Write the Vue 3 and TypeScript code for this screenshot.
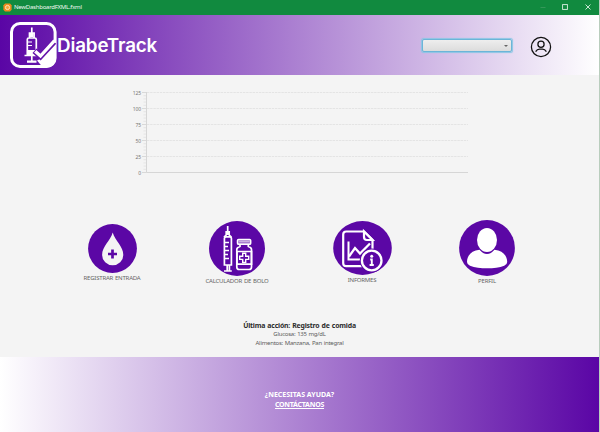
<script setup lang="ts">
interface Tick {
  value: number
  y: number
}

const ticks: Tick[] = [125, 100, 75, 50, 25, 0].map((value, i) => ({ value, y: 4.5 + i * 16 }))
const minorTicks: number[] = Array.from({ length: 25 }, (_, i) => 4.5 + i * 3.2)
</script>

<template>
  <div class="window">
    <div class="titlebar">
      <svg class="app-icon" viewBox="0 0 9 9">
        <path d="M2 .6h5L8.6 2.2v4.6L7 8.4H2L.4 6.8V2.2z" fill="#f08a1c" />
        <circle cx="4.5" cy="4.5" r="2.1" fill="#f9a43c" stroke="#ffe3b5" stroke-width="1" />
      </svg>
      <span class="title">NewDashboardFXML.fxml</span>
      <svg class="controls" viewBox="0 0 60 15">
        <path d="M.5 7.5h5" stroke="#3d9c60" stroke-width=".8" />
        <rect x="22.6" y="4.6" width="4.8" height="4.8" fill="none" stroke="#dcefe2" stroke-width=".9" />
        <path d="M45.5 4.5l5 5m0-5l-5 5" stroke="#dcefe2" stroke-width=".9" />
      </svg>
    </div>

    <header class="header">
      <svg class="logo" viewBox="0 0 48 48">
        <path d="M46.500 21v16.500q0 9-9 9H34L28 39.500 33 37z" fill="#fff" />
        <rect x="2.500" y="2.500" width="43.600" height="43" rx="8.500" fill="none" stroke="#fff" stroke-width="3" />
        <path d="M22.800 6.500V12M20.500 17v-5h4.600v5M18.300 35V18.500q0-1.500 1.500-1.500h6q1.500 0 1.500 1.500V35M15.500 34.500h14.500M22.800 35v5" fill="none" stroke="#fff" stroke-width="1.700" />
        <path d="M21 12h3.600v4H21zM18.500 29h8.500v6h-8.500zM18 39.500h9.500v2.300H18z" fill="#fff" />
        <path d="M19 21h4M19 24.500h4" stroke="#fff" stroke-width="1.200" />
        <path d="M25.500 29.800l6 5.400L45 20.800" fill="none" stroke="#6514aa" stroke-width="6" />
        <path d="M26.200 30.200l5.300 4.800L45.500 19.700" fill="none" stroke="#fff" stroke-width="3.300" />
      </svg>
      <span class="brand">DiabeTrack</span>
      <div class="combo"><i class="arrow"></i></div>
      <svg class="account" viewBox="0 0 22 22" fill="none" stroke="#111" stroke-width="1.250">
        <circle cx="11" cy="11" r="9.600" />
        <circle cx="11" cy="8.200" r="3.100" />
        <path d="M5.600 15.700Q7.200 13.200 9.500 13.200h3q2.300 0 3.900 2.500" />
      </svg>
    </header>

    <main class="content">
      <svg class="chart" viewBox="0 0 350 90">
        <g v-for="t in ticks" :key="t.value">
          <text x="21" :y="t.y + 2" class="tick-label">{{ t.value }}</text>
          <path :d="`M22 ${t.y}h4.500`" stroke="#d0d0d0" stroke-width=".8" />
          <path v-if="t.value" :d="`M27 ${t.y}H348`" stroke="#e2e2e2" stroke-width=".9" stroke-dasharray="2.400 .8" />
        </g>
        <path v-for="y in minorTicks" :key="y" :d="`M23.500 ${y}h2.500`" stroke="#dadada" stroke-width=".6" />
        <path d="M26.500 4V84.500H348" fill="none" stroke="#d6d6d6" stroke-width="1" />
      </svg>

      <nav class="tiles">
        <a class="tile entry">
          <svg viewBox="0 0 49 49">
            <circle cx="24.500" cy="24.500" r="24.400" fill="#5b07a5" />
            <path d="M24.700 8.500C27 17 35.300 22 35.300 31a10.600 10.300 0 0 1-21.200 0C14.100 22 22.500 17 24.700 8.500z" fill="#f4f4f4" />
            <path d="M24.500 25.500v9M20 30h9" stroke="#5b07a5" stroke-width="2.700" />
          </svg>
          <span>REGISTRAR ENTRADA</span>
        </a>
        <a class="tile bolus">
          <svg viewBox="0 0 56 55">
            <ellipse cx="28" cy="27.500" rx="28" ry="27.400" fill="#5b07a5" />
            <g fill="none" stroke="#fff" stroke-width="1.700">
              <path d="M18.700 5v9M17.200 10v4l-2.200 2.200M20.200 10v4l2.200 2.200" />
              <path d="M15.400 44V17.500q0-1.700 1.700-1.700h3.600q1.700 0 1.700 1.700V44zM18.200 44v5.500M20.400 44v5.500M15 50h7.800" />
              <path d="M16 21.500h4M16 25.500h3M16 29.500h4M16 33.500h3M16 37.500h4" stroke-width="1.300" />
              <rect x="28.600" y="18.600" width="13" height="4.600" rx="1" />
              <path d="M31 23.500v2q-3.200 1-3.200 3V46q0 2.500 2.500 2.500h9.700q2.500 0 2.500-2.500V28.500q0-2-3.200-3v-2" />
              <path d="M28 30.500h14.500v12.700H28z" />
              <path d="M33.700 32.200h3v3h3v3.200h-3v3h-3v-3h-3v-3.200h3z" stroke-width="1.400" />
            </g>
            <path d="M29.500 19.500h11.300v2.200H29.500z" fill="#cbb2e2" />
          </svg>
          <span>CALCULADOR DE BOLO</span>
        </a>
        <a class="tile reports">
          <svg viewBox="0 0 59 54">
            <ellipse cx="29.500" cy="27" rx="29.300" ry="26.900" fill="#5b07a5" />
            <g fill="none" stroke="#fff" stroke-width="2.200">
              <path d="M30 45.200H13.200q-3 0-3-3V13.500q0-3 3-3H31l8.500 8.500v9" />
              <path d="M31 10.500V16q0 3 3 3h5.500z" fill="#5b07a5" />
              <path d="M15.500 20.500V38.500h13" stroke-width="2" />
              <path d="M16 35.500l6-8.500 5 5.500 10-10" stroke-width="2.300" />
            </g>
            <circle cx="38.700" cy="39.500" r="12" fill="#5b07a5" />
            <circle cx="38.700" cy="39.500" r="9.800" fill="none" stroke="#fff" stroke-width="2.300" />
            <circle cx="38.700" cy="35.300" r="1.500" fill="#fff" />
            <path d="M37.200 38.500h1.600v5.500m-2.200 0h4.200" fill="none" stroke="#fff" stroke-width="1.900" />
          </svg>
          <span>INFORMES</span>
        </a>
        <a class="tile profile">
          <svg viewBox="0 0 56 56">
            <circle cx="28" cy="28" r="27.900" fill="#5b07a5" />
            <path d="M8 42c0-6 4-11.500 12.500-12.200Q24 34 28 34t7.500-4.200C44 30.500 48.200 36 48.200 42q0 2.500-3 3.700c-9 3.500-25 3.500-34.200 0Q8 44.500 8 42z" fill="#fff" />
            <ellipse cx="28" cy="20" rx="10" ry="12" fill="#fff" />
          </svg>
          <span>PERFIL</span>
        </a>
      </nav>

      <section class="last">
        <strong>Última acción: Registro de comida</strong>
        <span class="glucose">Glucosa: 135 mg/dL</span>
        <span class="food">Alimentos: Manzana, Pan integral</span>
      </section>
    </main>

    <footer class="footer">
      <span class="help">¿NECESITAS AYUDA?</span>
      <a class="contact">CONTÁCTANOS</a>
    </footer>
  </div>
</template>

<style>
body {
  margin: 0;
}
</style>

<style scoped>
.window {
  box-sizing: border-box;
  width: 600px;
  height: 432px;
  display: flex;
  flex-direction: column;
  overflow: hidden;
  background: #f4f4f4;
  border-right: 1px solid #b9cdbd;
  font-family: "Noto Sans", "Open Sans", sans-serif;
}
.titlebar {
  flex: none;
  height: 15px;
  margin-right: -1px;
  display: flex;
  align-items: center;
  background: #118a3f;
  color: #f0f8f2;
}
.app-icon {
  width: 9px;
  height: 9px;
  margin: 0 2px 1px 3px;
}
.title {
  font-size: 6px;
  letter-spacing: -0.24px;
  line-height: 15px;
  white-space: nowrap;
}
.controls {
  width: 60px;
  height: 15px;
  margin-left: auto;
}
.header {
  flex: none;
  height: 60px;
  display: flex;
  align-items: flex-start;
  background: linear-gradient(90deg, #5a05a5, #fff);
}
.logo {
  flex: none;
  width: 48px;
  height: 48px;
  margin: 6px 0 0 9px;
}
.brand {
  width: 365px;
  margin-top: 18px;
  font-family: Inter, Lato, sans-serif;
  font-weight: 600;
  font-size: 18.8px;
  letter-spacing: -0.15px;
  line-height: 26px;
  color: #fff;
}
.combo {
  flex: none;
  box-sizing: border-box;
  width: 90px;
  height: 13px;
  margin-top: 24px;
  display: flex;
  align-items: center;
  justify-content: flex-end;
  padding-right: 3px;
  border: 1px solid #6bb5d8;
  border-radius: 2px;
  background: linear-gradient(#eee, #dcdcdc);
  box-shadow: 0 0 1px 0.5px #8cc6e4;
}
.arrow {
  border: 2px solid transparent;
  border-top-color: #666;
  border-bottom: 0;
}
.account {
  flex: none;
  width: 22px;
  height: 22px;
  margin: 21px 0 0 17.5px;
}
.content {
  flex: none;
  height: 282px;
  display: flex;
  flex-direction: column;
}
.chart {
  flex: none;
  width: 350px;
  height: 90px;
  margin: 13px 0 0 120px;
}
.tick-label {
  font-size: 5px;
  letter-spacing: -0.15px;
  text-anchor: end;
  fill: #777;
}
.tiles {
  flex: none;
  height: 110px;
  margin: 42px 0 0 49.5px;
  display: grid;
  grid-template-columns: repeat(4, 125px);
}
.tile {
  display: flex;
  flex-direction: column;
  align-items: center;
  font-size: 6px;
  letter-spacing: -0.2px;
  word-spacing: 0.5px;
  line-height: 8px;
  color: #666;
  white-space: nowrap;
}
.entry svg {
  width: 49px;
  height: 49px;
  margin: 3.5px 0 1.5px;
}
.bolus svg {
  width: 56px;
  height: 55px;
  margin: 1px 0;
}
.reports svg {
  width: 59px;
  height: 54px;
  margin: 1px 0;
}
.profile svg {
  width: 56px;
  height: 56px;
  margin: 0.4px 0 0.6px;
}
.last {
  margin-top: -9.5px;
  display: flex;
  flex-direction: column;
  align-items: center;
  font-size: 6px;
  letter-spacing: -0.25px;
  word-spacing: 0.5px;
  line-height: 9px;
  color: #5c5c5c;
}
.last strong {
  font-size: 6.9px;
  letter-spacing: -0.18px;
  color: #2c2c2c;
}
.footer {
  flex: 1;
  display: flex;
  flex-direction: column;
  align-items: center;
  padding-top: 33px;
  background: linear-gradient(90deg, #fff, #5a05a5);
  color: #fff;
  font-weight: 700;
  font-size: 7px;
  line-height: 10px;
}
.contact {
  letter-spacing: -0.25px;
  text-decoration: underline;
}
</style>
